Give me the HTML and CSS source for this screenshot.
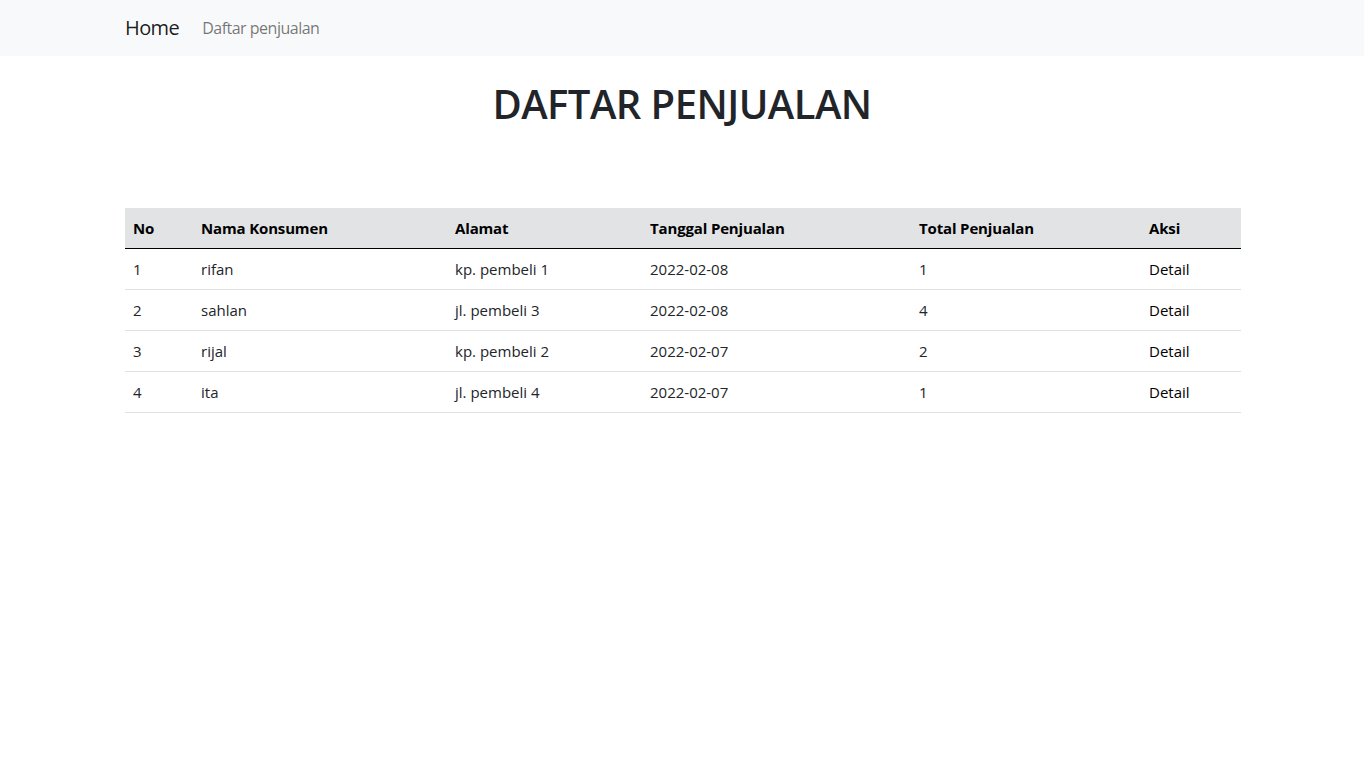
FILE: index.html
```html
<!DOCTYPE html>
<html lang="id">
<head>
<meta charset="utf-8">
<title>Daftar Penjualan</title>
<link rel="stylesheet" href="styles.css">
</head>
<body>
<nav class="navbar">
  <div class="container nav-inner">
    <a class="brand" href="#">Home</a>
    <a class="nav-link" href="#">Daftar penjualan</a>
  </div>
</nav>
<main class="container">
  <h1 class="title">DAFTAR PENJUALAN</h1>
  <table class="table">
    <colgroup>
      <col class="c-no"><col class="c-nama"><col class="c-alamat"><col class="c-tgl"><col class="c-total"><col class="c-aksi">
    </colgroup>
    <thead>
      <tr><th>No</th><th>Nama Konsumen</th><th>Alamat</th><th>Tanggal Penjualan</th><th>Total Penjualan</th><th>Aksi</th></tr>
    </thead>
    <tbody>
      <tr><td>1</td><td>rifan</td><td>kp. pembeli 1</td><td>2022-02-08</td><td>1</td><td><a class="detail" href="#">Detail</a></td></tr>
      <tr><td>2</td><td>sahlan</td><td>jl. pembeli 3</td><td>2022-02-08</td><td>4</td><td><a class="detail" href="#">Detail</a></td></tr>
      <tr><td>3</td><td>rijal</td><td>kp. pembeli 2</td><td>2022-02-07</td><td>2</td><td><a class="detail" href="#">Detail</a></td></tr>
      <tr><td>4</td><td>ita</td><td>jl. pembeli 4</td><td>2022-02-07</td><td>1</td><td><a class="detail" href="#">Detail</a></td></tr>
    </tbody>
  </table>
</main>
</body>
</html>
```
FILE: styles.css
```css
* { box-sizing: border-box; }
body {
  margin: 0;
  font-family: "Open Sans", "Noto Sans", sans-serif;
  font-size: 16px;
  line-height: 1.5;
  color: #212529;
  background: #fff;
}
.container {
  width: 1140px;
  margin: 0 auto;
  padding: 0 12px;
}
.navbar {
  background: #f8f9fa;
  height: 56px;
}
.nav-inner {
  display: flex;
  align-items: center;
  height: 56px;
}
.brand {
  font-size: 20px;
  line-height: 30px;
  color: rgba(0,0,0,.9);
  text-decoration: none;
  margin-right: 16px;
  margin-left: 1px;
  letter-spacing: -0.6px;
}
.nav-link {
  font-size: 16px;
  line-height: 24px;
  padding: 8px 8px 8px 7px;
  color: rgba(0,0,0,.55);
  text-decoration: none;
  letter-spacing: -0.5px;
}
.title {
  margin: 24px 0 80px;
  text-align: center;
  font-size: 40px;
  line-height: 48px;
  font-weight: 600;
  color: #212529;
  letter-spacing: -0.55px;
}
.table {
  width: 1116px;
  margin-left: 1px;
  border-collapse: collapse;
  table-layout: fixed;
}
.c-no { width: 68px; }
.c-nama { width: 254px; }
.c-alamat { width: 195px; }
.c-tgl { width: 269px; }
.c-total { width: 230px; }
.c-aksi { width: 100px; }
.table th {
  text-align: left;
  font-weight: 700;
  color: #000;
  background: #e2e3e5;
  padding: 8px;
  border-bottom: 1px solid #000;
  font-size: 15px;
  line-height: 24px;
  letter-spacing: -0.15px;
}
.table td {
  padding: 8px;
  border-bottom: 1px solid #dee2e6;
  font-size: 15px;
  line-height: 24px;
  letter-spacing: 0;
}
.detail {
  color: #000;
  text-decoration: none;
}
```
